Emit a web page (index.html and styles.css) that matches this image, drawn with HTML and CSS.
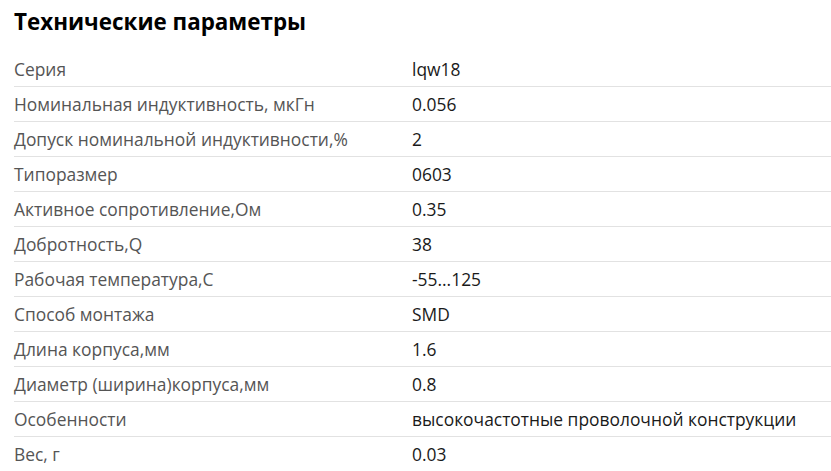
FILE: index.html
```html
<!DOCTYPE html>
<html lang="ru">
<head>
<meta charset="utf-8">
<link rel="stylesheet" href="styles.css">
</head>
<body>
<section class="specs">
  <h2 class="specs-title">Технические параметры</h2>
  <table class="specs-table">
    <tbody>
      <tr><td class="k">Серия</td><td class="v">lqw18</td></tr>
      <tr><td class="k">Номинальная индуктивность, мкГн</td><td class="v">0.056</td></tr>
      <tr><td class="k">Допуск номинальной индуктивности,%</td><td class="v">2</td></tr>
      <tr><td class="k">Типоразмер</td><td class="v">0603</td></tr>
      <tr><td class="k">Активное сопротивление,Ом</td><td class="v">0.35</td></tr>
      <tr><td class="k">Добротность,Q</td><td class="v">38</td></tr>
      <tr><td class="k">Рабочая температура,С</td><td class="v">-55...125</td></tr>
      <tr><td class="k">Способ монтажа</td><td class="v">SMD</td></tr>
      <tr><td class="k">Длина корпуса,мм</td><td class="v">1.6</td></tr>
      <tr><td class="k">Диаметр (ширина)корпуса,мм</td><td class="v">0.8</td></tr>
      <tr><td class="k">Особенности</td><td class="v">высокочастотные проволочной конструкции</td></tr>
      <tr><td class="k">Вес, г</td><td class="v">0.03</td></tr>
    </tbody>
  </table>
</section>
</body>
</html>
```
FILE: styles.css
```css
html, body {
  margin: 0;
  padding: 0;
  background: #fff;
}
body {
  font-family: "Open Sans", "Noto Sans", sans-serif;
  overflow: hidden;
}
.specs {
  padding-left: 14px;
}
.specs-title {
  margin: 0;
  height: 52px;
  box-sizing: border-box;
  padding-top: 7px;
  font-size: 22.4px;
  line-height: 30px;
  font-weight: 700;
  color: #000;
}
.specs-table {
  width: 100%;
  border-collapse: collapse;
  font-size: 17.4px;
}
.specs-table td {
  height: 34px;
  padding: 0;
  line-height: 22px;
  vertical-align: middle;
  border-bottom: 1px solid #e2e2e2;
}
.specs-table .k {
  width: 398px;
  color: #555;
}
.specs-table .v {
  color: #1a1a1a;
}
```
